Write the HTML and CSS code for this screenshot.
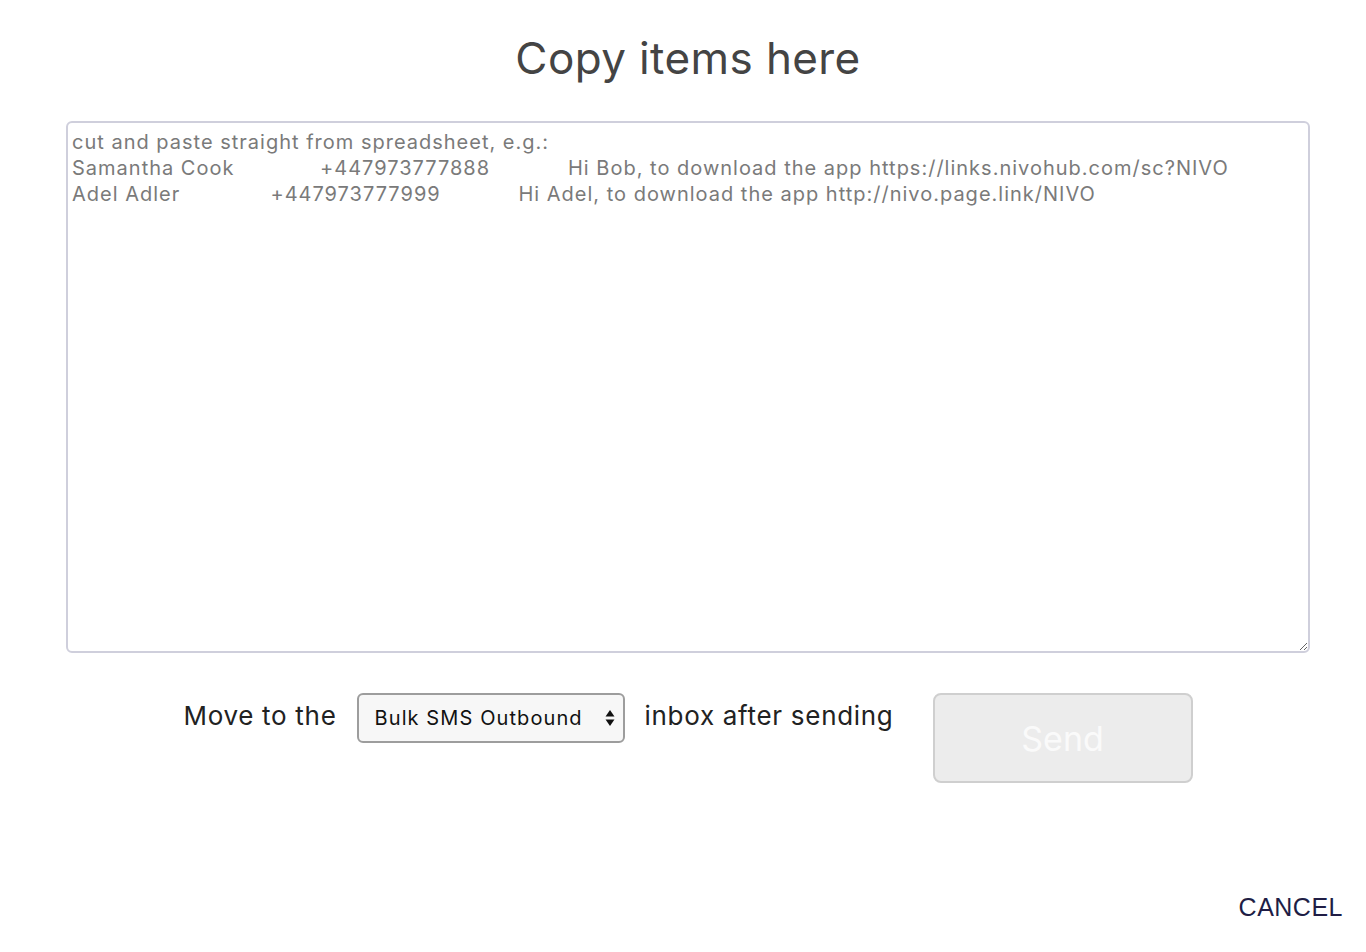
FILE: index.html
```html
<!DOCTYPE html>
<html lang="en">
<head>
<meta charset="utf-8">
<title>Copy items here</title>
<link rel="stylesheet" href="styles.css">
</head>
<body>
<main class="page">
  <h1 class="title">Copy items here</h1>
  <textarea class="paste" placeholder="cut and paste straight from spreadsheet, e.g.:&#10;Samantha Cook&#9;&#9;+447973777888&#9;&#9;Hi Bob, to download the app https://links.nivohub.com/sc?NIVO&#10;Adel Adler&#9;&#9;+447973777999&#9;&#9;Hi Adel, to download the app http://nivo.page.link/NIVO"></textarea>
  <div class="controls">
    <span class="label">Move to the</span>
    <span class="select-wrap">
      <select class="inbox">
        <option>Bulk SMS Outbound</option>
      </select>
      <svg class="arrows" width="10" height="18" viewBox="0 0 10 18" aria-hidden="true">
        <path d="M5 1 L9.5 7.5 H0.5 Z" fill="#111"/>
        <path d="M5 17 L9.5 10.5 H0.5 Z" fill="#111"/>
      </svg>
    </span>
    <span class="label">inbox after sending</span>
    <button class="send" disabled>Send</button>
  </div>
  <div class="footer">
    <a class="cancel" href="#">CANCEL</a>
  </div>
</main>
</body>
</html>
```
FILE: styles.css
```css
html, body {
  margin: 0;
  padding: 0;
  background: #ffffff;
}

.page {
  display: flex;
  flex-direction: column;
  padding: 0 56px 0 66px;
  height: 952px;
  box-sizing: border-box;
  font-family: Inter, "Liberation Sans", sans-serif;
}

.title {
  margin: 32px 0 0;
  text-align: center;
  font-family: Inter, "Liberation Sans", Arial, sans-serif;
  font-weight: 400;
  font-size: 44px;
  letter-spacing: 0.4px;
  line-height: 52px;
  color: #444444;
}

.paste {
  margin-top: 37px;
  width: 1244px;
  height: 532px;
  box-sizing: border-box;
  border: 2px solid #cfcfdc;
  border-radius: 6px;
  padding: 6px 4px 4px;
  font-family: Inter, "Liberation Sans", sans-serif;
  font-size: 20px;
  letter-spacing: 1px;
  line-height: 26px;
  tab-size: 49.6px;
  color: #333;
  resize: both;
  outline: none;
}

.paste::placeholder {
  color: #7a7a7a;
  opacity: 1;
}

.controls {
  display: flex;
  justify-content: center;
  align-items: flex-start;
  gap: 20px;
  margin-top: 40px;
}

.label {
  font-size: 26px;
  letter-spacing: 0.7px;
  line-height: 46px;
  color: #222222;
}

.select-wrap {
  position: relative;
  display: inline-block;
}

.inbox {
  appearance: none;
  -webkit-appearance: none;
  width: 268px;
  height: 50px;
  box-sizing: border-box;
  border: 2px solid #9d9d9d;
  border-radius: 6px;
  background: #f7f7f7;
  padding: 0 30px 0 16px;
  font-family: Inter, "Liberation Sans", sans-serif;
  font-size: 20px;
  letter-spacing: 1.1px;
  color: #111111;
}

.arrows {
  position: absolute;
  right: 10px;
  top: 16px;
  pointer-events: none;
}

.send {
  margin-left: 19px;
  width: 260px;
  height: 90px;
  box-sizing: border-box;
  border: 2px solid #cfcfcf;
  border-radius: 8px;
  background: #ececec;
  color: #fafafa;
  font-family: Inter, "Liberation Sans", sans-serif;
  font-size: 34px;
}

.footer {
  margin-top: auto;
  display: flex;
  justify-content: flex-end;
  margin-right: -33px;
  padding-bottom: 30px;
}

.cancel {
  font-family: "Liberation Sans", Arial, sans-serif;
  font-size: 25px;
  letter-spacing: 0.5px;
  color: #201d45;
  text-decoration: none;
}
```
